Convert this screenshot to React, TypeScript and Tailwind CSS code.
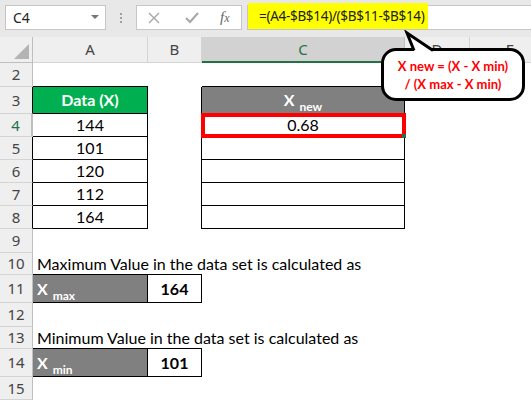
import React from "react";

const cellFont = { fontFamily: "Lato, 'Liberation Sans', sans-serif" };
const uiFont = { fontFamily: "'Noto Sans', 'Liberation Sans', sans-serif" };

function RowHead({ n, className = "" }: { n: number; className?: string }) {
  return (
    <div
      className={`flex items-center justify-center border-b border-r border-b-[#d4d4d4] border-r-[#bfbfbf] bg-[#efefef] text-[15px] text-[#444] ${className}`}
      style={uiFont}
    >
      {n}
    </div>
  );
}

function C({ className = "", children }: { className?: string; children?: React.ReactNode }) {
  return <div className={`flex items-center ${className}`}>{children}</div>;
}

function Sub({ main, sub }: { main: string; sub: string }) {
  return (
    <span className="font-bold text-white">
      <span className="text-[16px]">{main}</span>
      <span className="relative top-[5px] ml-[5px] text-[12px]">{sub}</span>
    </span>
  );
}

export default function App() {
  const values = ["144", "101", "120", "112", "164"];

  return (
    <div className="relative h-[400px] w-[531px] overflow-hidden bg-white" style={cellFont}>
      {/* formula bar */}
      <div className="flex h-[37px] items-start bg-[#e8e8e8] pt-[5px]" style={uiFont}>
        <div className="ml-[5px] flex h-[25px] w-[101px] items-center justify-between border border-[#c6c6c6] bg-white pl-[7px] pr-[6px] text-[14px] text-[#222]">
          <span>C4</span>
          <svg width="8" height="5" viewBox="0 0 8 5">
            <polygon points="0,0 8,0 4,4" fill="#777" />
          </svg>
        </div>
        <div className="flex h-[25px] w-[30px] flex-col items-center justify-center gap-[2px]">
          <span className="h-[2px] w-[2px] bg-[#a0a0a0]" />
          <span className="h-[2px] w-[2px] bg-[#a0a0a0]" />
          <span className="h-[2px] w-[2px] bg-[#a0a0a0]" />
        </div>
        <div className="flex h-[25px] w-[106px] items-center border border-[#c6c6c6] bg-white">
          <svg className="ml-[11px]" width="12" height="12" viewBox="0 0 12 12">
            <path d="M1 1 L11 11 M11 1 L1 11" stroke="#a6a6a6" strokeWidth="1.4" fill="none" />
          </svg>
          <svg className="ml-[25px]" width="14" height="12" viewBox="0 0 14 12">
            <path d="M1 6 L5 10 L13 1" stroke="#a6a6a6" strokeWidth="2" fill="none" />
          </svg>
          <span className="ml-[21px] text-[15px] italic text-[#666]" style={{ fontFamily: "'Liberation Serif', serif" }}>
            f<span className="text-[12px]">x</span>
          </span>
        </div>
        <div className="ml-[5px] flex h-[25px] flex-1 items-start border-y border-l border-[#c6c6c6] bg-white">
          <div className="-mt-[3px] flex h-[26px] w-[180px] items-center whitespace-nowrap bg-[#ffff00] pl-[11px] text-[13.5px] tracking-[-0.3px] text-[#222]">
            =(A4-$B$14)/($B$11-$B$14)
          </div>
        </div>
      </div>

      {/* column headers */}
      <div className="flex h-[26px] bg-[#efefef] text-[15px] text-[#444]" style={uiFont}>
        <div className="relative w-[33px] shrink-0 border-r border-b border-[#bfbfbf]">
          <svg className="absolute right-[3px] bottom-[3px]" width="15" height="15" viewBox="0 0 15 15">
            <polygon points="15,0 15,15 0,15" fill="#b4b4b4" />
          </svg>
        </div>
        <div className="flex w-[115px] shrink-0 items-center justify-center border-r border-b border-[#d4d4d4]">A</div>
        <div className="flex w-[54px] shrink-0 items-center justify-center border-r border-b border-[#d4d4d4]">B</div>
        <div className="flex w-[203px] shrink-0 items-center justify-center border-r border-b-2 border-r-[#bfbfbf] border-b-[#217346] bg-[#d2d2d2] text-[#217346]">
          C
        </div>
        <div className="flex w-[65px] shrink-0 items-center justify-center border-r border-b border-[#d4d4d4]">D</div>
        <div className="flex w-[80px] shrink-0 items-center justify-center border-b border-[#d4d4d4]">E</div>
      </div>

      {/* sheet */}
      <div className="grid grid-cols-[33px_115px_54px_203px_65px_1fr] grid-rows-[24px_27px_23px_23px_23px_23px_23px_24px_22px_28px_24px_22px_28px_23px] text-[16px] text-black">
        {/* row 2 */}
        <RowHead n={2} />
        <C className="border-b border-black" />
        <C />
        <C className="border-b border-black" />
        <C />
        <C />

        {/* row 3 */}
        <RowHead n={3} className="border-r-black" />
        <C className="justify-center border-r border-b border-black bg-[#00b050] font-bold text-white">Data (X)</C>
        <C className="border-r border-black" />
        <C className="justify-center border-r border-b border-black bg-[#808080]">
          <Sub main="X" sub="new" />
        </C>
        <C />
        <C />

        {/* rows 4-8 */}
        {values.map((v, i) => (
          <React.Fragment key={v + i}>
            <RowHead
              n={i + 4}
              className={i === 0 ? "border-r-2 border-r-[#217346] bg-[#d2d2d2] text-[#217346]" : "border-r-black"}
            />
            <C className="justify-center border-r border-b border-black">{v}</C>
            <C className="border-r border-black" />
            {i === 0 ? (
              <C className="relative z-10 justify-center border-r border-b border-black outline-[4px] outline-solid outline-[#ff0000] -outline-offset-3">
                0.68
                <span className="absolute -right-[2px] -bottom-[2px] h-[4px] w-[4px] bg-[#217346]" />
              </C>
            ) : (
              <C className="border-r border-b border-black" />
            )}
            <C />
            <C />
          </React.Fragment>
        ))}

        {/* row 9 */}
        <RowHead n={9} />
        <C />
        <C />
        <C />
        <C />
        <C />

        {/* row 10 */}
        <RowHead n={10} />
        <C className="overflow-visible whitespace-nowrap border-b border-black pl-[4px]">
          Maximum Value in the data set is calculated as
        </C>
        <C className="border-b border-black" />
        <C />
        <C />
        <C />

        {/* row 11 */}
        <RowHead n={11} />
        <C className="border-r border-b border-black bg-[#808080] pl-[4px]">
          <Sub main="X" sub="max" />
        </C>
        <C className="justify-center border-r border-b border-black font-bold">164</C>
        <C />
        <C />
        <C />

        {/* row 12 */}
        <RowHead n={12} />
        <C />
        <C />
        <C />
        <C />
        <C />

        {/* row 13 */}
        <RowHead n={13} />
        <C className="overflow-visible whitespace-nowrap border-b border-black pl-[4px]">
          Minimum Value in the data set is calculated as
        </C>
        <C className="border-b border-black" />
        <C />
        <C />
        <C />

        {/* row 14 */}
        <RowHead n={14} />
        <C className="border-r border-b border-black bg-[#808080] pl-[4px]">
          <Sub main="X" sub="min" />
        </C>
        <C className="justify-center border-r border-b border-black font-bold">101</C>
        <C />
        <C />
        <C />

        {/* row 15 */}
        <RowHead n={15} />
        <C />
        <C />
        <C />
        <C />
        <C />
      </div>

      {/* callout */}
      <div className="absolute left-[381px] top-[48px] z-20 flex h-[53px] w-[144px] flex-col items-center justify-center rounded-[15px] border-[3px] border-black bg-white text-[13px] leading-[18px] font-bold text-[#ff0000]">
        <span>X new = (X - X min)</span>
        <span>/ (X max - X min)</span>
      </div>
      <svg className="absolute left-[400px] top-[30px] z-30" width="40" height="24" viewBox="0 0 40 24">
        <polygon points="7,3 14.4,22 34.4,22" fill="white" />
        <polyline points="14,20.5 7,3 33,20.5" fill="none" stroke="black" strokeWidth="3" strokeLinejoin="miter" />
      </svg>
    </div>
  );
}
